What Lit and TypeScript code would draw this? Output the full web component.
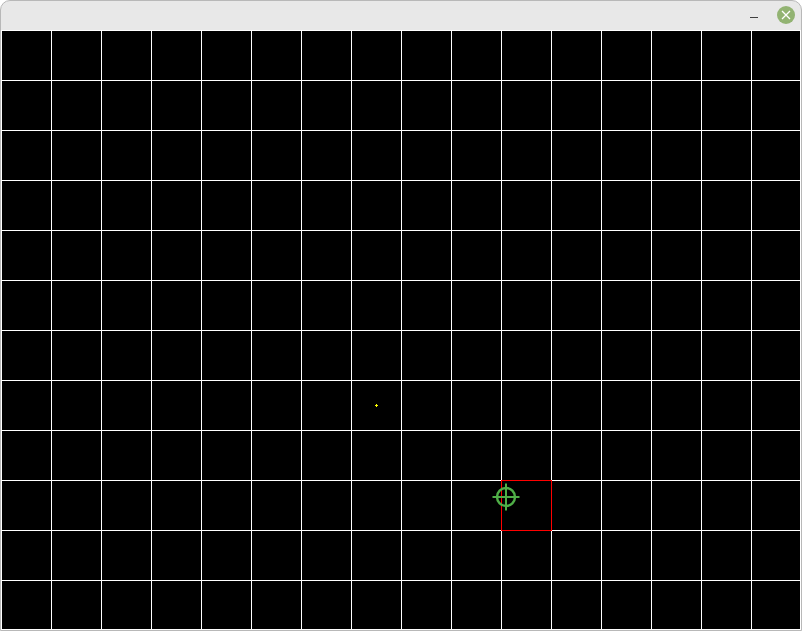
import { LitElement, html, css, svg } from "lit";
import { customElement, property, state } from "lit/decorators.js";

const CELL = 50;

@customElement("grid-board")
export class GridBoard extends LitElement {
  @property({ attribute: false }) selected = { col: 10, row: 9 };
  @property({ attribute: false }) dot = { x: 375, y: 375 };
  @property({ attribute: false }) pointer = { x: 505, y: 467 };

  static styles = css`
    :host {
      display: flex;
      flex: 1;
      background: #000;
    }
    .board {
      flex: 1;
      display: block;
      width: 100%;
      min-height: 0;
      box-sizing: border-box;
      border-right: 1px solid #fff;
      border-bottom: 1px solid #fff;
    }
    .line {
      fill: #fff;
    }
    .selection {
      fill: none;
      stroke: #f00;
    }
    .dot {
      fill: #ff0;
    }
    .cross {
      fill: none;
      stroke: #4fae47;
      stroke-width: 2;
    }
    .ring {
      stroke-width: 2.4;
    }
  `;

  private renderPointer() {
    const { x, y } = this.pointer;
    return svg`
      <g transform="translate(${x} ${y})">
        <circle class="cross ring" r="9"></circle>
        <path class="cross" d="M0 -13.5V13.5M-13.5 0H13.5"></path>
      </g>`;
  }

  render() {
    const { col, row } = this.selected;
    return html`
      <svg class="board" role="img" aria-label="Grid">
        <defs>
          <pattern id="cells" width=${CELL} height=${CELL} patternUnits="userSpaceOnUse">
            <path class="line" d="M0 0H50V1H1V50H0Z"></path>
          </pattern>
        </defs>
        <rect width="100%" height="100%" fill="url(#cells)"></rect>
        <rect
          class="selection"
          x=${col * CELL + 0.5}
          y=${row * CELL + 0.5}
          width=${CELL}
          height=${CELL}
        ></rect>
        <path class="dot" d="M${this.dot.x} ${this.dot.y - 1}h1v1h1v1h-1v1h-1v-1h-1v-1h1z"></path>
        ${this.renderPointer()}
      </svg>
    `;
  }
}

@customElement("app-root")
export class AppRoot extends LitElement {
  @state() private minimized = false;

  static styles = css`
    :host {
      display: flex;
      flex-direction: column;
      height: 100vh;
      background: #fff;
    }
    .window {
      flex: 1;
      display: flex;
      flex-direction: column;
      box-sizing: border-box;
      border: 1px solid #b8b8b8;
      border-radius: 10px 10px 0 0;
      overflow: hidden;
      background: #e8e8e8;
    }
    .titlebar {
      display: flex;
      justify-content: flex-end;
      align-items: center;
      gap: 14px;
      height: 28px;
      padding: 0 6px 1px;
    }
    .control {
      display: flex;
      width: 18px;
      height: 18px;
      padding: 0;
      border: 0;
      border-radius: 50%;
      background: none;
    }
    .close {
      background: #92b372;
    }
    .glyph {
      display: block;
      fill: none;
      stroke: #404040;
    }
    .close .glyph {
      stroke: #fff;
      stroke-width: 1.3;
    }
  `;

  render() {
    return html`
      <main class="window">
        <header class="titlebar">
          <button
            class="control"
            aria-label="Minimize"
            @click=${() => (this.minimized = !this.minimized)}
          >
            <svg class="glyph" width="18" height="18"><path d="M5 11.5H13"></path></svg>
          </button>
          <button class="control close" aria-label="Close">
            <svg class="glyph" width="18" height="18">
              <path d="M5 5L13 13M13 5L5 13"></path>
            </svg>
          </button>
        </header>
        ${this.minimized ? null : html`<grid-board></grid-board>`}
      </main>
    `;
  }
}
